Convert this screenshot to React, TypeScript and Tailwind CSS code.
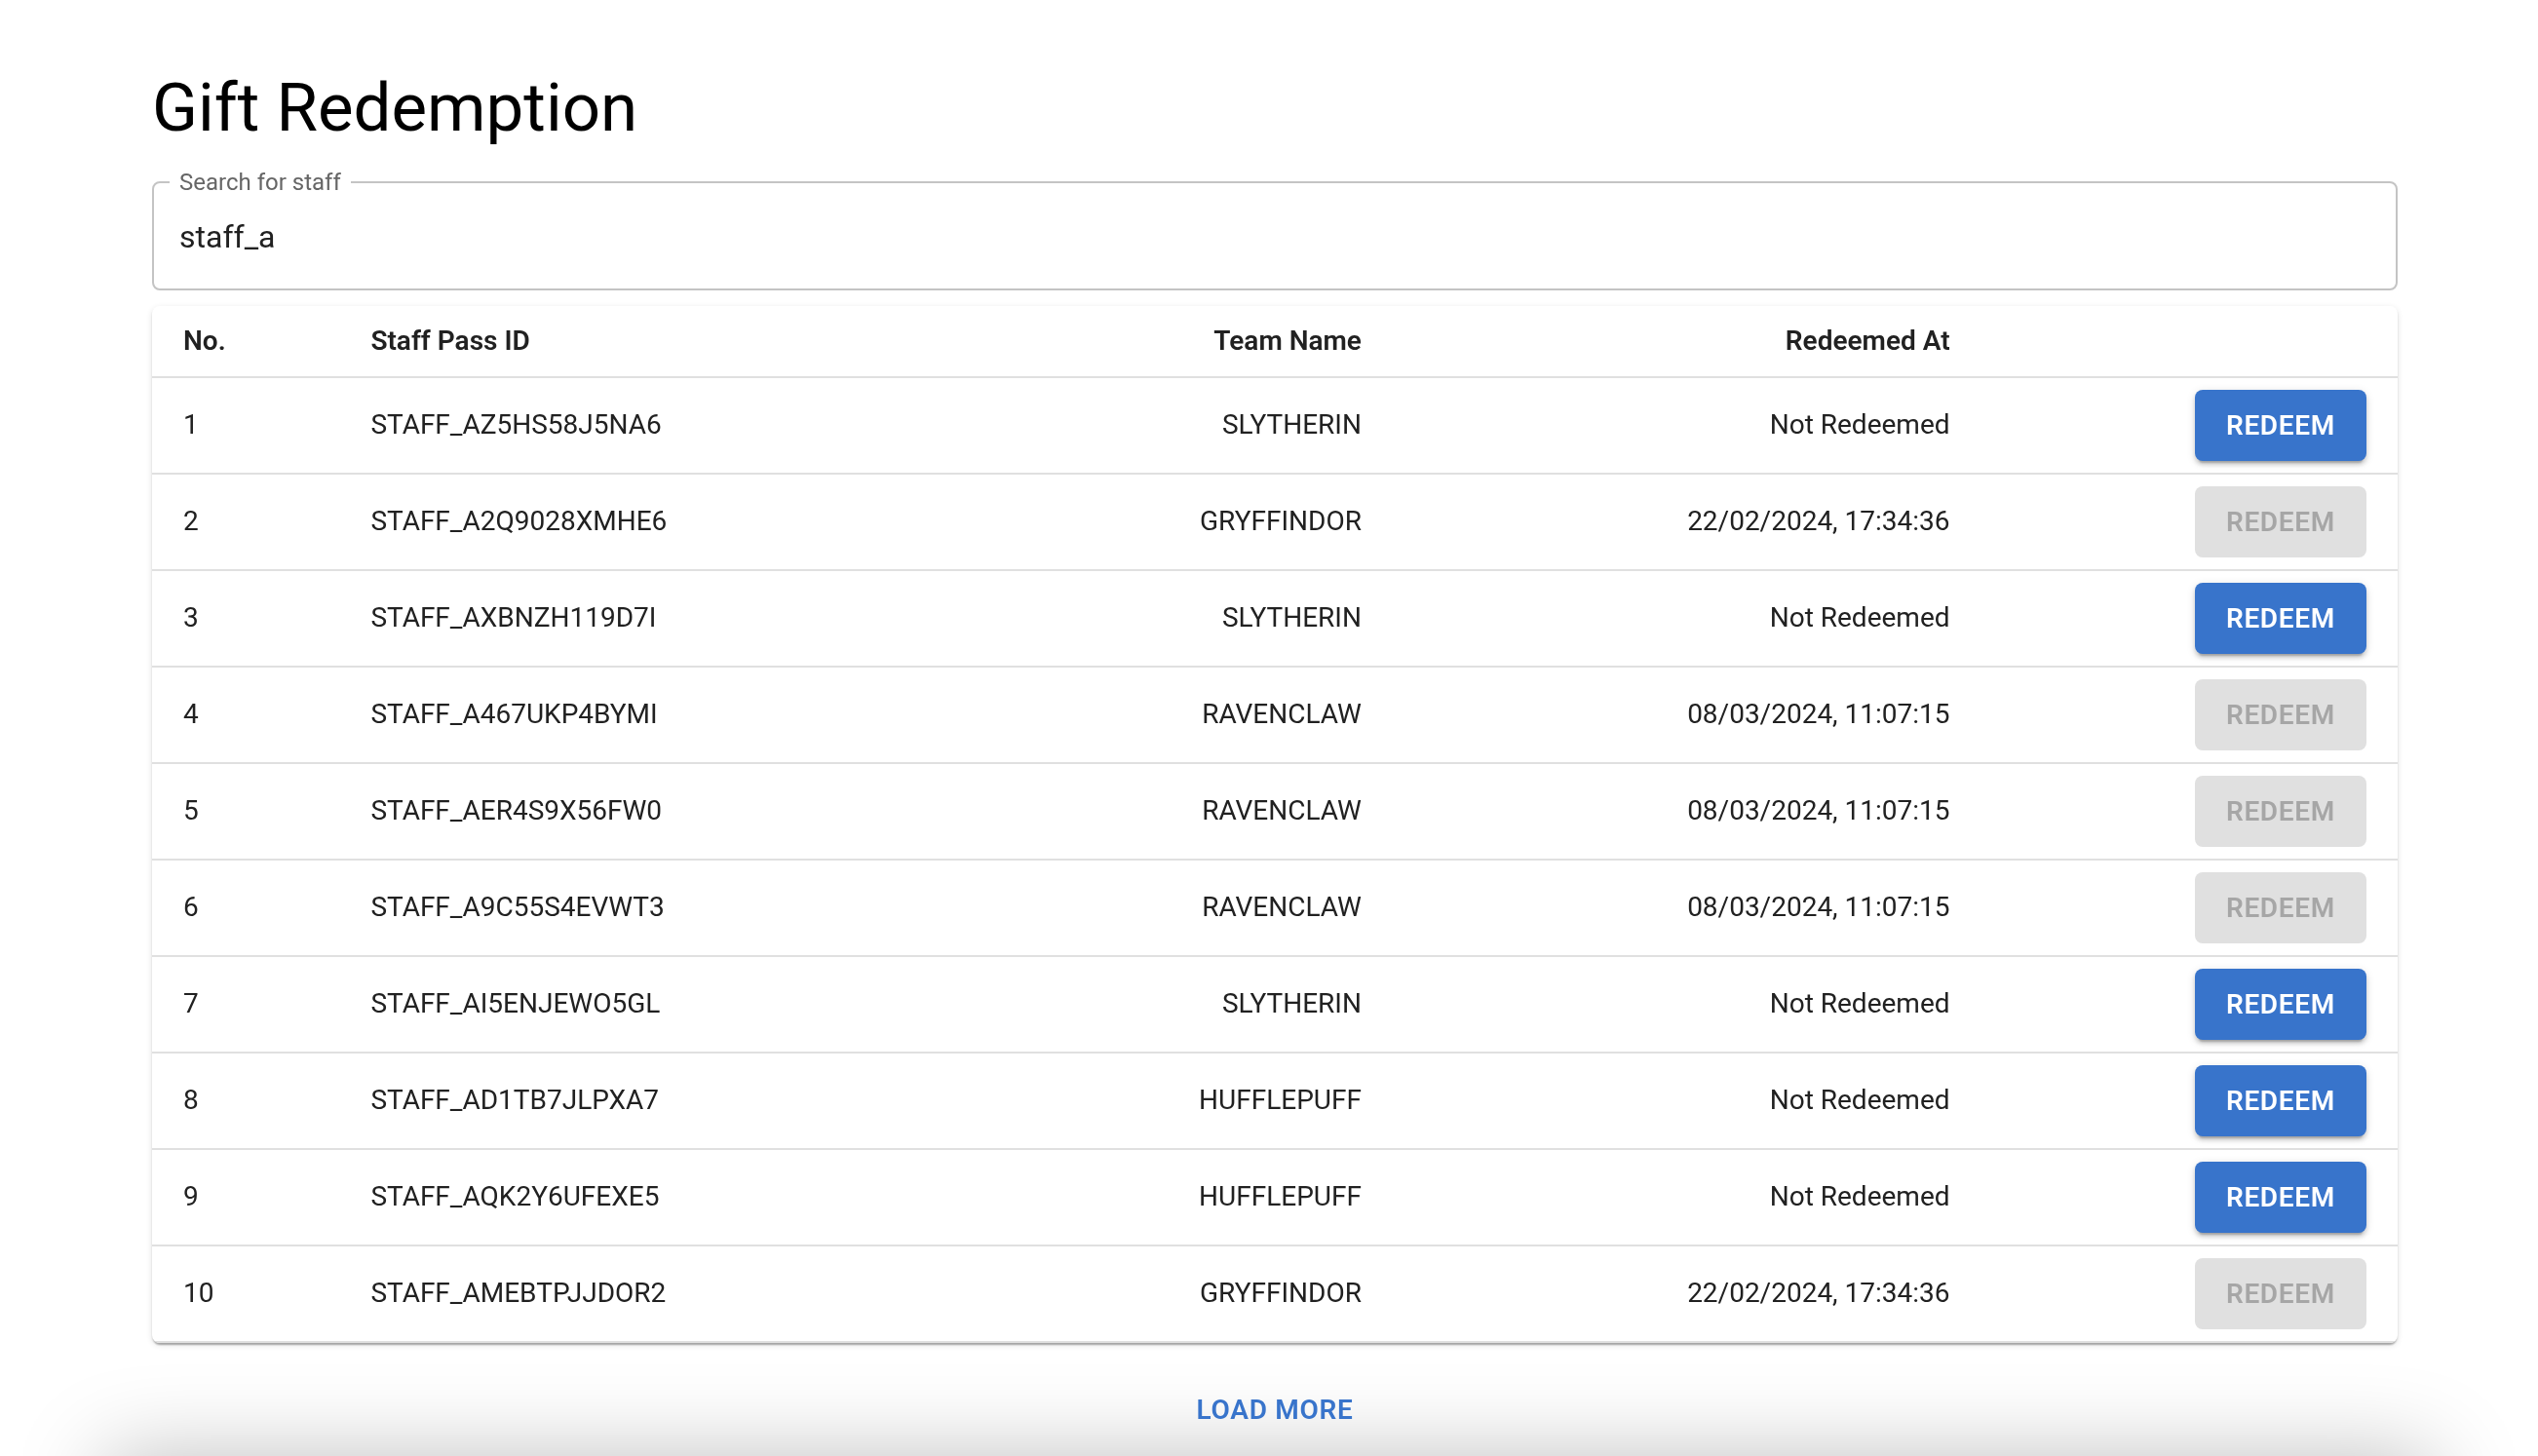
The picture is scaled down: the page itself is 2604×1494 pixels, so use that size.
import { useState } from "react";

type Entry = { passId: string; team: string; redeemedAt: string | null };

const entries: Entry[] = [
  { passId: "STAFF_AZ5HS58J5NA6", team: "SLYTHERIN", redeemedAt: null },
  { passId: "STAFF_A2Q9028XMHE6", team: "GRYFFINDOR", redeemedAt: "22/02/2024, 17:34:36" },
  { passId: "STAFF_AXBNZH119D7I", team: "SLYTHERIN", redeemedAt: null },
  { passId: "STAFF_A467UKP4BYMI", team: "RAVENCLAW", redeemedAt: "08/03/2024, 11:07:15" },
  { passId: "STAFF_AER4S9X56FW0", team: "RAVENCLAW", redeemedAt: "08/03/2024, 11:07:15" },
  { passId: "STAFF_A9C55S4EVWT3", team: "RAVENCLAW", redeemedAt: "08/03/2024, 11:07:15" },
  { passId: "STAFF_AI5ENJEWO5GL", team: "SLYTHERIN", redeemedAt: null },
  { passId: "STAFF_AD1TB7JLPXA7", team: "HUFFLEPUFF", redeemedAt: null },
  { passId: "STAFF_AQK2Y6UFEXE5", team: "HUFFLEPUFF", redeemedAt: null },
  { passId: "STAFF_AMEBTPJJDOR2", team: "GRYFFINDOR", redeemedAt: "22/02/2024, 17:34:36" },
];

function SearchField() {
  const [query, setQuery] = useState("staff_a");
  return (
    <fieldset className="rounded-lg border-2 border-[#c4c4c4]">
      <legend className="ml-4 px-2.5 text-2xl leading-7 text-[#666666]">
        <label htmlFor="staff-search">Search for staff</label>
      </legend>
      <input
        id="staff-search"
        type="text"
        value={query}
        onChange={(e) => setQuery(e.target.value)}
        className="block h-[95px] w-full bg-transparent px-[26px] pb-3 text-[32px] text-[#212121] outline-none"
      />
    </fieldset>
  );
}

function RedeemButton({ disabled }: { disabled: boolean }) {
  return (
    <button
      type="button"
      disabled={disabled}
      className="h-[73px] rounded-lg bg-[#3874cb] px-8 align-middle text-[28px] font-semibold tracking-wide text-white uppercase shadow-[0_6px_2px_-4px_rgba(0,0,0,0.2),0_4px_4px_rgba(0,0,0,0.14),0_2px_10px_rgba(0,0,0,0.12)] disabled:bg-[#e0e0e0] disabled:text-[#a6a6a6] disabled:shadow-none"
    >
      Redeem
    </button>
  );
}

function StaffTable() {
  return (
    <div className="overflow-hidden rounded-lg bg-white shadow-[0_4px_2px_-2px_rgba(0,0,0,0.2),0_2px_2px_rgba(0,0,0,0.14),0_2px_6px_rgba(0,0,0,0.12)]">
      <table className="w-full table-fixed border-separate border-spacing-0 text-[28px] leading-10 text-[#212121]">
        <colgroup>
          <col className="w-[8.35%]" />
          <col className="w-[23.9%]" />
          <col className="w-[23%]" />
          <col className="w-[26.2%]" />
          <col />
        </colgroup>
        <thead>
          <tr className="h-[74px] *:border-b-2 *:border-[#e0e0e0] *:px-8 *:font-semibold">
            <th scope="col" className="text-left">No.</th>
            <th scope="col" className="text-left">Staff Pass ID</th>
            <th scope="col" className="text-right">Team Name</th>
            <th scope="col" className="text-right">Redeemed At</th>
            <td />
          </tr>
        </thead>
        <tbody>
          {entries.map((entry, i) => (
            <tr key={entry.passId} className="h-[99px] *:border-b-2 *:border-[#e0e0e0] *:px-8">
              <td className="pb-0.5">{i + 1}</td>
              <td className="pb-0.5">{entry.passId}</td>
              <td className="pb-0.5 text-right">{entry.team}</td>
              <td className="pb-0.5 text-right">{entry.redeemedAt ?? "Not Redeemed"}</td>
              <td className="py-3 text-right leading-none">
                <RedeemButton disabled={entry.redeemedAt !== null} />
              </td>
            </tr>
          ))}
        </tbody>
      </table>
    </div>
  );
}

export default function App() {
  return (
    <div className="relative min-h-screen overflow-hidden bg-white font-['Roboto',sans-serif]">
      {/* soft shade rising from the bottom edge of the window */}
      <div className="pointer-events-none fixed inset-x-[108px] -bottom-[200px] h-[200px] shadow-[0_0_90px_rgba(0,0,0,0.25)]" />
      <main className="relative flex flex-col pt-[69px] pr-36 pl-[156px]">
        <h1 className="text-[69px] leading-[84px] text-black">Gift Redemption</h1>
        <div className="mt-5 mb-4">
          <SearchField />
        </div>
        <StaffTable />
        <button
          type="button"
          className="mt-8 h-[73px] self-center rounded-lg px-4 text-[28px] font-semibold tracking-wide text-[#3874cb] uppercase"
        >
          Load more
        </button>
      </main>
    </div>
  );
}
